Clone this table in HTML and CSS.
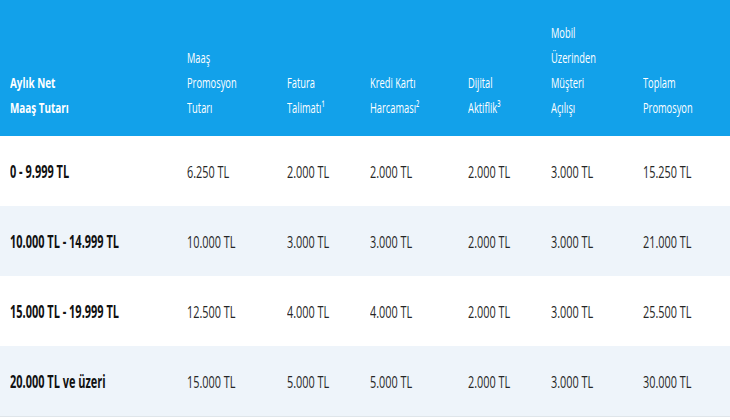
FILE: index.html
```html
<!DOCTYPE html>
<html lang="tr">
<head>
<meta charset="utf-8">
<title>Maaş Promosyonu</title>
<link rel="stylesheet" href="styles.css">
</head>
<body>
<div class="table">
  <div class="row head">
    <div class="cell first"><span class="t">Aylık Net<br>Maaş Tutarı</span></div>
    <div class="cell"><span class="t">Maaş<br>Promosyon<br>Tutarı</span></div>
    <div class="cell"><span class="t">Fatura<br>Talimatı¹</span></div>
    <div class="cell"><span class="t">Kredi Kartı<br>Harcaması²</span></div>
    <div class="cell"><span class="t">Dijital<br>Aktiflik³</span></div>
    <div class="cell"><span class="t">Mobil<br>Üzerinden<br>Müşteri<br>Açılışı</span></div>
    <div class="cell"><span class="t">Toplam<br>Promosyon</span></div>
  </div>
  <div class="row data">
    <div class="cell first"><span class="t">0 - 9.999 TL</span></div>
    <div class="cell"><span class="t">6.250 TL</span></div>
    <div class="cell"><span class="t">2.000 TL</span></div>
    <div class="cell"><span class="t">2.000 TL</span></div>
    <div class="cell"><span class="t">2.000 TL</span></div>
    <div class="cell"><span class="t">3.000 TL</span></div>
    <div class="cell"><span class="t">15.250 TL</span></div>
  </div>
  <div class="row data alt">
    <div class="cell first"><span class="t">10.000 TL - 14.999 TL</span></div>
    <div class="cell"><span class="t">10.000 TL</span></div>
    <div class="cell"><span class="t">3.000 TL</span></div>
    <div class="cell"><span class="t">3.000 TL</span></div>
    <div class="cell"><span class="t">2.000 TL</span></div>
    <div class="cell"><span class="t">3.000 TL</span></div>
    <div class="cell"><span class="t">21.000 TL</span></div>
  </div>
  <div class="row data">
    <div class="cell first"><span class="t">15.000 TL - 19.999 TL</span></div>
    <div class="cell"><span class="t">12.500 TL</span></div>
    <div class="cell"><span class="t">4.000 TL</span></div>
    <div class="cell"><span class="t">4.000 TL</span></div>
    <div class="cell"><span class="t">2.000 TL</span></div>
    <div class="cell"><span class="t">3.000 TL</span></div>
    <div class="cell"><span class="t">25.500 TL</span></div>
  </div>
  <div class="row data alt last">
    <div class="cell first"><span class="t">20.000 TL ve üzeri</span></div>
    <div class="cell"><span class="t">15.000 TL</span></div>
    <div class="cell"><span class="t">5.000 TL</span></div>
    <div class="cell"><span class="t">5.000 TL</span></div>
    <div class="cell"><span class="t">2.000 TL</span></div>
    <div class="cell"><span class="t">3.000 TL</span></div>
    <div class="cell"><span class="t">30.000 TL</span></div>
  </div>
</div>
</body>
</html>
```
FILE: styles.css
```css
html, body {
  margin: 0;
  padding: 0;
  background: #ffffff;
}
body {
  font-family: "Open Sans", "Liberation Sans", sans-serif;
  width: 730px;
  height: 420px;
  overflow: hidden;
}
.table {
  display: flex;
  flex-direction: column;
}
.row {
  display: grid;
  grid-template-columns: 177px 100px 83px 98px 83px 92px 1fr;
  padding-left: 10px;
}
.t {
  display: inline-block;
  white-space: nowrap;
  transform: scaleX(0.64);
  transform-origin: left center;
}
.head {
  height: 136px;
  box-sizing: border-box;
  background: #12a1ea;
  color: #ffffff;
  font-size: 15px;
  line-height: 25px;
  align-items: end;
  padding-bottom: 16px;
}
.head .t {
  transform: scaleX(0.62);
}
.head .first {
  font-weight: 700;
}
.head .first .t {
  transform: scaleX(0.66);
}
.data {
  height: 70px;
  align-items: center;
  color: #262626;
  font-size: 17px;
  background: #ffffff;
}
.data.alt {
  background: #eef4fa;
}
.data .first {
  font-weight: 700;
  color: #111111;
}
.data .first .t {
  transform: scaleX(0.645);
}
.data.last {
  border-bottom: 1px solid #dfe5ea;
}
```
